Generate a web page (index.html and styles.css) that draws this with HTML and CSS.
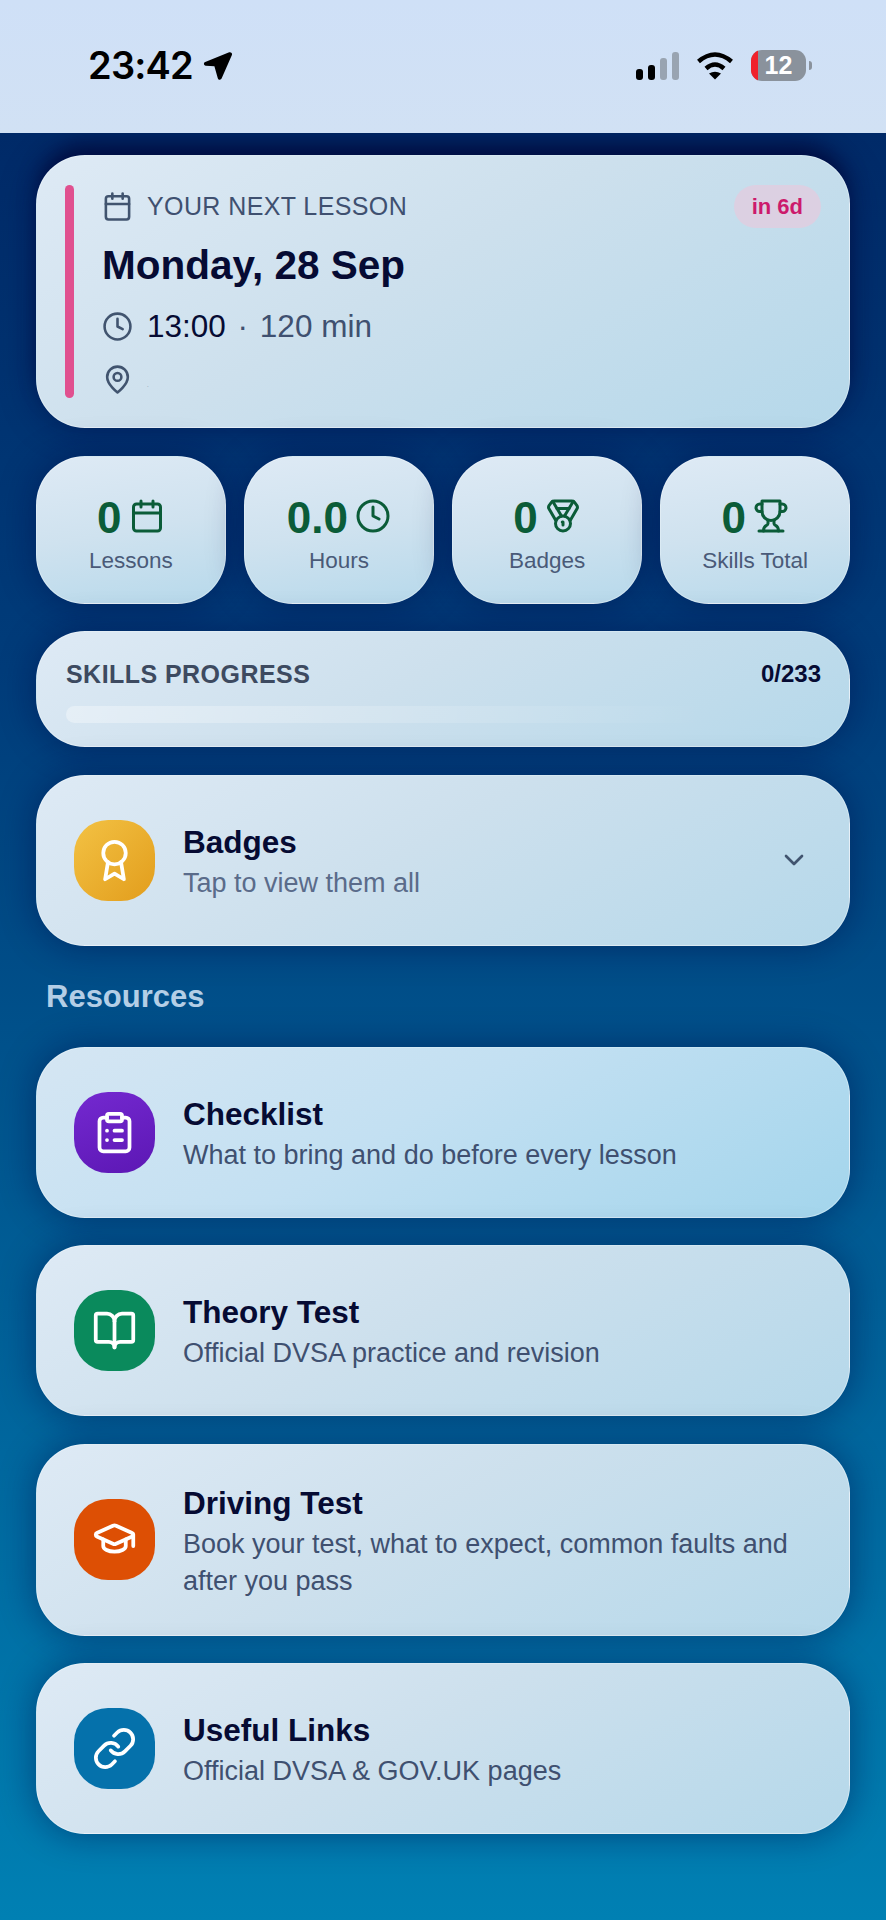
FILE: index.html
```html
<!DOCTYPE html>
<html lang="en">
<head>
  <meta charset="UTF-8">
  <meta name="viewport" content="width=device-width, initial-scale=1.0">
  <title>Dashboard</title>
  <link rel="stylesheet" href="styles.css">
</head>
<body>
  <header class="status-bar">
    <div class="status-time">
      <span>23:42</span>
      <svg class="status-arrow" viewBox="0 0 30 30"><path d="M27.200 1.800 3.200 11.500c-2 .9-1.500 3.700.6 3.800l8.600.4 3.400 12c.6 2 3.300 2 3.900.1L29.900 4.500c.6-1.800-1-3.400-2.700-2.700Z"/></svg>
    </div>
    <div class="status-icons">
      <div class="signal">
        <span class="bar bar-1"></span>
        <span class="bar bar-2"></span>
        <span class="bar bar-3"></span>
        <span class="bar bar-4"></span>
      </div>
      <svg class="wifi" viewBox="0 0 38 29" fill="none" stroke="#000" stroke-width="4.500">
        <path d="M2.500 10.500Q19-3.500 35.500 10.500"/>
        <path d="M10 17.500Q19 9.500 28 17.500"/>
        <path d="M13 22.500Q19 19 25 22.500L19 28.500Z" fill="#000" stroke="none"/>
      </svg>
      <div class="battery">
        <span class="battery-low"></span>
        <span class="battery-level">12</span>
      </div>
      <span class="battery-nub"></span>
    </div>
  </header>

  <main class="page">
    <section class="card lesson">
      <div class="lesson-bar"></div>
      <div class="lesson-body">
        <div class="lesson-head">
          <svg class="ico ico-sm" viewBox="0 0 24 24"><path d="M8 2v4"/><path d="M16 2v4"/><rect width="18" height="18" x="3" y="4" rx="2"/><path d="M3 10h18"/></svg>
          <span class="lesson-label">YOUR NEXT LESSON</span>
          <span class="pill">in 6d</span>
        </div>
        <h1 class="lesson-date">Monday, 28 Sep</h1>
        <div class="lesson-line lesson-time">
          <svg class="ico ico-sm" viewBox="0 0 24 24"><circle cx="12" cy="12" r="10"/><polyline points="12 6 12 12 16 14"/></svg>
          <span><b>13:00</b> <i>·</i> 120 min</span>
        </div>
        <div class="lesson-line lesson-place">
          <svg class="ico ico-sm" viewBox="0 0 24 24"><path d="M20 10c0 6-8 12-8 12s-8-6-8-12a8 8 0 0 1 16 0Z"/><circle cx="12" cy="10" r="3"/></svg>
          <span class="place-text">.</span>
        </div>
      </div>
    </section>

    <section class="stats">
      <div class="card stat">
        <div class="stat-top">
          <span class="stat-num">0</span>
          <svg class="ico ico-stat" viewBox="0 0 24 24"><path d="M8 2v4"/><path d="M16 2v4"/><rect width="18" height="18" x="3" y="4" rx="2"/><path d="M3 10h18"/></svg>
        </div>
        <span class="stat-label">Lessons</span>
      </div>
      <div class="card stat">
        <div class="stat-top">
          <span class="stat-num">0.0</span>
          <svg class="ico ico-stat" viewBox="0 0 24 24"><circle cx="12" cy="12" r="10"/><polyline points="12 6 12 12 16 14"/></svg>
        </div>
        <span class="stat-label">Hours</span>
      </div>
      <div class="card stat">
        <div class="stat-top">
          <span class="stat-num">0</span>
          <svg class="ico ico-stat" viewBox="0 0 24 24"><path d="M7.210 15 2.660 7.140a2 2 0 0 1 .13-2.200L4.400 2.800A2 2 0 0 1 6 2h12a2 2 0 0 1 1.600.8l1.600 2.140a2 2 0 0 1 .14 2.200L16.790 15"/><path d="M11 12 5.120 2.200"/><path d="m13 12 5.880-9.800"/><path d="M8 7h8"/><circle cx="12" cy="17" r="5"/><path d="M12 18v-2h-.5"/></svg>
        </div>
        <span class="stat-label">Badges</span>
      </div>
      <div class="card stat">
        <div class="stat-top">
          <span class="stat-num">0</span>
          <svg class="ico ico-stat" viewBox="0 0 24 24"><path d="M6 9H4.500a2.500 2.500 0 0 1 0-5H6"/><path d="M18 9h1.500a2.500 2.500 0 0 0 0-5H18"/><path d="M4 22h16"/><path d="M10 14.660V17c0 .55-.47.98-.97 1.210C7.850 18.750 7 20.240 7 22"/><path d="M14 14.660V17c0 .55.47.98.97 1.210C16.150 18.750 17 20.240 17 22"/><path d="M18 2H6v7a6 6 0 0 0 12 0V2Z"/></svg>
        </div>
        <span class="stat-label">Skills Total</span>
      </div>
    </section>

    <section class="card progress">
      <div class="progress-head">
        <span class="progress-label">SKILLS PROGRESS</span>
        <span class="progress-count">0/233</span>
      </div>
      <div class="progress-track"></div>
    </section>

    <section class="card row">
      <div class="row-icon icon-gold">
        <svg class="ico ico-row" viewBox="0 0 24 24"><circle cx="12" cy="8" r="6"/><path d="M15.477 12.890 17 22l-5-3-5 3 1.523-9.110"/></svg>
      </div>
      <div class="row-text">
        <h2>Badges</h2>
        <p class="muted">Tap to view them all</p>
      </div>
      <svg class="ico chevron" viewBox="0 0 24 24"><path d="m6 9 6 6 6-6"/></svg>
    </section>

    <h3 class="section-title">Resources</h3>

    <section class="card row row-blue">
      <div class="row-icon icon-purple">
        <svg class="ico ico-row" viewBox="0 0 24 24"><rect width="8" height="4" x="8" y="2" rx="1" ry="1"/><path d="M16 4h2a2 2 0 0 1 2 2v14a2 2 0 0 1-2 2H6a2 2 0 0 1-2-2V6a2 2 0 0 1 2-2h2"/><path d="M12 11h4"/><path d="M12 16h4"/><path d="M8 11h.01"/><path d="M8 16h.01"/></svg>
      </div>
      <div class="row-text">
        <h2>Checklist</h2>
        <p>What to bring and do before every lesson</p>
      </div>
    </section>

    <section class="card row">
      <div class="row-icon icon-green">
        <svg class="ico ico-row" viewBox="0 0 24 24"><path d="M12 7v14"/><path d="M3 18a1 1 0 0 1-1-1V4a1 1 0 0 1 1-1h5a4 4 0 0 1 4 4 4 4 0 0 1 4-4h5a1 1 0 0 1 1 1v13a1 1 0 0 1-1 1h-6a3 3 0 0 0-3 3 3 3 0 0 0-3-3z"/></svg>
      </div>
      <div class="row-text">
        <h2>Theory Test</h2>
        <p>Official DVSA practice and revision</p>
      </div>
    </section>

    <section class="card row">
      <div class="row-icon icon-orange">
        <svg class="ico ico-row ico-cap" viewBox="0 0 24 24"><path d="M21.420 10.922a1 1 0 0 0-.019-1.838L12.830 5.180a2 2 0 0 0-1.660 0L2.600 9.080a1 1 0 0 0 0 1.832l8.570 3.908a2 2 0 0 0 1.660 0z"/><path d="M22 10v6"/><path d="M6 12.500V16a6 3 0 0 0 12 0v-3.500"/></svg>
      </div>
      <div class="row-text">
        <h2>Driving Test</h2>
        <p>Book your test, what to expect, common faults and after you pass</p>
      </div>
    </section>

    <section class="card row">
      <div class="row-icon icon-blue">
        <svg class="ico ico-row" viewBox="0 0 24 24"><path d="M10 13a5 5 0 0 0 7.540.54l3-3a5 5 0 0 0-7.070-7.070l-1.720 1.710"/><path d="M14 11a5 5 0 0 0-7.540-.54l-3 3a5 5 0 0 0 7.070 7.070l1.710-1.710"/></svg>
      </div>
      <div class="row-text">
        <h2>Useful Links</h2>
        <p>Official DVSA &amp; GOV.UK pages</p>
      </div>
    </section>
  </main>
</body>
</html>
```

FILE: styles.css
```css
* {
  box-sizing: border-box;
}
body {
  margin: 0;
  height: 1920px;
  overflow: hidden;
  font-family: "Liberation Sans", Arial, sans-serif;
  color: #060b33;
  background: #0080b3;
}

/* status bar */
.status-bar {
  position: relative;
  z-index: 1;
  height: 133px;
  display: flex;
  justify-content: space-between;
  align-items: flex-start;
  padding: 50px 74px 0 88px;
  background: linear-gradient(#cfe0f7, #d1e1f4);
}
.status-time {
  display: flex;
  align-items: center;
  gap: 9px;
  font-family: Inter, sans-serif;
  font-size: 38px;
  font-weight: 600;
  letter-spacing: -.8px;
  line-height: 31px;
  color: #000;
}
.status-arrow {
  width: 30px;
  height: 31px;
}
.status-icons {
  display: flex;
  align-items: center;
  height: 31px;
}
.signal {
  display: flex;
  align-items: flex-end;
  gap: 5px;
  height: 28px;
  margin-right: 17px;
}
.bar {
  width: 7px;
  border-radius: 3px;
  background: #000;
}
.bar-1 { height: 11px; }
.bar-2 { height: 15px; }
.bar-3 { height: 22px; background: #99a4b1; }
.bar-4 { height: 28px; background: #99a4b1; }
.wifi {
  width: 38px;
  height: 29px;
  margin-right: 17px;
}
.battery {
  position: relative;
  width: 55px;
  height: 31px;
  border-radius: 11px;
  overflow: hidden;
  background: #8a929c;
  color: #fff;
  font-size: 25px;
  font-weight: 700;
  line-height: 31px;
  text-align: center;
}
.battery-low {
  position: absolute;
  left: 0;
  top: 0;
  bottom: 0;
  width: 7px;
  background: #f0212b;
}
.battery-level {
  position: relative;
}
.battery-nub {
  width: 3px;
  height: 9px;
  margin-left: 3px;
  border-radius: 0 3px 3px 0;
  background: #8a929c;
}

/* page */
.page {
  height: 1787px;
  padding: 22px 36px 0;
  display: flex;
  flex-direction: column;
  gap: 27.500px;
  background: linear-gradient(#002a68 0%, #003c7a 30%, #00508a 50%, #00689f 75%, #0080b3 100%);
}
.card {
  border-radius: 49px;
  border: 1px solid rgba(255, 255, 255, .35);
  background: linear-gradient(150deg, #deeaf5 0%, #cde0ed 45%, #b5d8ea 100%);
  box-shadow: 0 0 34px 2px rgba(0, 10, 70, .42);
}
.ico {
  fill: none;
  stroke: currentColor;
  stroke-width: 2;
  stroke-linecap: round;
  stroke-linejoin: round;
  flex: none;
}
.ico-sm {
  width: 31px;
  height: 31px;
  color: #41546f;
}

/* next lesson */
.lesson {
  height: 273px;
  display: flex;
  gap: 28px;
  padding: 29px 28px 29px 28px;
  box-shadow: 0 0 34px 2px rgba(0, 10, 70, .42), 0 -14px 20px -4px rgba(0, 0, 45, .65);
}
.lesson-bar {
  width: 9px;
  border-radius: 5px;
  background: #e0508f;
}
.lesson-body {
  flex: 1;
}
.lesson-head {
  display: flex;
  align-items: center;
  height: 43px;
}
.lesson-label {
  margin-left: 14px;
  font-size: 25px;
  letter-spacing: .4px;
  color: #3f5070;
}
.pill {
  margin-left: auto;
  height: 43px;
  padding: 0 18px;
  border-radius: 22px;
  background: #dcd0e2;
  color: #cc1a6c;
  font-size: 22px;
  font-weight: 700;
  line-height: 43px;
}
.lesson-date {
  margin: 14px 0 0;
  font-size: 40.500px;
  font-weight: 700;
  line-height: 46px;
}
.lesson-line {
  display: flex;
  align-items: center;
  gap: 14px;
  height: 31px;
}
.lesson-time {
  margin-top: 23px;
  font-size: 31.500px;
  color: #3f5070;
}
.lesson-time b {
  font-weight: 400;
  color: #060b33;
}
.lesson-time i {
  font-style: normal;
  margin: 0 3px;
}
.lesson-place {
  margin-top: 22px;
}
.place-text {
  margin-top: 10px;
  font-size: 6px;
  color: #6a7a90;
}

/* stats */
.stats {
  display: grid;
  grid-template-columns: repeat(4, 1fr);
  gap: 18.500px;
}
.stat {
  height: 148px;
  display: flex;
  flex-direction: column;
  align-items: center;
  padding-top: 43px;
  background: linear-gradient(170deg, #deeaf5 0%, #cfe2ef 50%, #b7d9eb 100%);
}
.stat-top {
  display: flex;
  align-items: center;
  gap: 7px;
  height: 36px;
  color: #0b5c38;
}
.stat-num {
  font-size: 44px;
  font-weight: 700;
}
.ico-stat {
  width: 36px;
  height: 36px;
  margin-bottom: 3px;
}
.stat-label {
  margin-top: 10px;
  font-size: 22.500px;
  line-height: 30px;
  color: #4a5a78;
}

/* skills progress */
.progress {
  height: 116px;
  padding: 28px 28px 0 29px;
}
.progress-head {
  display: flex;
  justify-content: space-between;
  align-items: center;
  height: 28px;
}
.progress-label {
  font-size: 25px;
  font-weight: 700;
  letter-spacing: .45px;
  color: #3d4a60;
}
.progress-count {
  font-size: 24px;
  font-weight: 700;
}
.progress-track {
  margin-top: 18px;
  height: 17px;
  border-radius: 9px;
  background: linear-gradient(90deg, rgba(255, 255, 255, .35), rgba(255, 255, 255, 0) 85%);
}

/* rows */
.row {
  min-height: 171px;
  display: flex;
  align-items: center;
  padding: 35px 37px;
}
.row-blue {
  background: linear-gradient(150deg, #d5e6f3 0%, #c3e0f2 45%, #a3d5ec 100%);
}
.row-icon {
  width: 81px;
  height: 81px;
  border-radius: 34px;
  display: flex;
  align-items: center;
  justify-content: center;
  color: #fff;
  flex: none;
}
.ico-row {
  width: 45px;
  height: 45px;
}
.ico-cap {
  margin-bottom: 3px;
}
.icon-gold { background: linear-gradient(135deg, #f3c244, #e29d1c); }
.icon-purple { background: linear-gradient(160deg, #7429d0, #5c17b4); }
.icon-green { background: #0a8a5c; }
.icon-orange { background: #dd4f04; }
.icon-blue { background: #0571ab; }
.row-text {
  flex: 1;
  margin: 4px 0 0 28px;
}
.row-text h2 {
  margin: 0;
  font-size: 31.500px;
  font-weight: 700;
  line-height: 38px;
}
.row-text p {
  margin: 4px 0 0;
  font-size: 27px;
  line-height: 37px;
  color: #3f5070;
}
.row-text p.muted {
  color: #5a6b8a;
}
.chevron {
  width: 32px;
  height: 32px;
  margin-right: 2px;
  color: #41546f;
}

.section-title {
  margin: 7px 0 5px 10px;
  font-size: 31px;
  font-weight: 700;
  line-height: 34px;
  color: #b4cee6;
}
```
